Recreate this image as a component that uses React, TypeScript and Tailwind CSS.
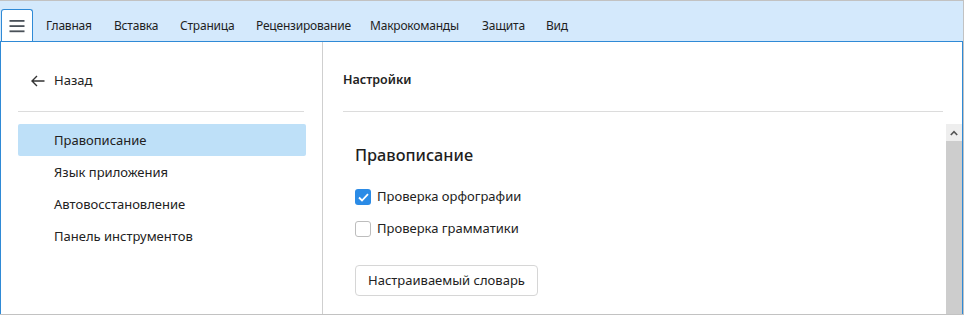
import React from "react";

const tabs: [string, number][] = [
  ["Главная", 68],
  ["Вставка", 66],
  ["Страница", 76],
  ["Рецензирование", 114],
  ["Макрокоманды", 112],
  ["Защита", 64],
  ["Вид", 40],
];
const items = ["Правописание", "Язык приложения", "Автовосстановление", "Панель инструментов"];

export default function App() {
  return (
    <div
      className="w-[964px] h-[315px] flex flex-col border-t border-r border-b border-[#c2c2c2] bg-white text-[#222]"
      style={{ fontFamily: '"Noto Sans", "Open Sans", sans-serif' }}
    >
      <div className="h-[41px] bg-[#d4e9fc] border-b border-[#2f8ad6] flex items-end shrink-0">
        <div className="ml-px w-[32px] h-[32px] bg-white border-l border-t border-r border-[#2f8ad6] rounded-t-[3px] flex items-center justify-center">
          <svg width="16" height="14" viewBox="0 0 16 14">
            <rect x="0.5" y="1" width="15" height="1.8" fill="#4a5159" />
            <rect x="0.5" y="6.2" width="15" height="1.8" fill="#4a5159" />
            <rect x="0.5" y="11.4" width="15" height="1.8" fill="#4a5159" />
          </svg>
        </div>
        <div className="flex h-[32px] items-center pl-[13px] pt-[1px] text-[12px] tracking-[-0.2px] text-[#1e1e1e]">
          {tabs.map(([t, w]) => (
            <span key={t} className="whitespace-nowrap" style={{ width: w }}>
              {t}
            </span>
          ))}
        </div>
      </div>
      <div className="flex-1 flex border-l border-r border-[#2f8ad6] min-h-0">
        <div className="w-[322px] border-r border-[#cfcfcf] pl-[17px] pr-[16px] pt-[21px] shrink-0">
          <div className="h-[32px] flex items-center pl-[13px] pt-[3px] text-[13px]">
            <svg width="14" height="12" viewBox="0 0 14 12" className="mr-[9px]">
              <path d="M6 1 L1 6 L6 11 M1 6 H13.5" fill="none" stroke="#333" strokeWidth="1.4" />
            </svg>
            <span>Назад</span>
          </div>
          <div className="mt-[16px] h-px bg-[#dcdcdc] mr-[2px]" />
          <div className="mt-[12px] flex flex-col">
            {items.map((t, i) => (
              <div
                key={t}
                className={`h-[32px] flex items-center pl-[36px] pt-[2px] text-[13px] rounded-[2px] ${i === 0 ? "bg-[#bee0f8]" : ""}`}
              >
                {t}
              </div>
            ))}
          </div>
        </div>
        <div className="flex-1 flex flex-col pt-[21px] min-w-0">
          <div className="pl-[20px] pr-[19px]">
            <div className="h-[32px] flex items-center pt-[2px] text-[12.5px] font-semibold text-[#222]">Настройки</div>
            <div className="mt-[16px] h-px bg-[#dcdcdc]" />
          </div>
          <div className="mt-[12px] flex-1 flex min-h-0">
            <div className="flex-1 pl-[32px] pt-[19px]">
              <div className="text-[16.3px] font-medium leading-[24px] text-[#1e1e1e]">Правописание</div>
              <div className="mt-[14px] flex flex-col">
                <label className="h-[32px] flex items-center text-[13px]">
                  <span className="w-[16px] h-[16px] rounded-[3px] bg-[#2b8be6] flex items-center justify-center mr-[6px]">
                    <svg width="11" height="9" viewBox="0 0 11 9">
                      <path d="M1 4.5 L4 7.5 L10 1.2" fill="none" stroke="white" strokeWidth="1.8" />
                    </svg>
                  </span>
                  Проверка орфографии
                </label>
                <label className="h-[32px] flex items-center text-[13px]">
                  <span className="w-[16px] h-[16px] rounded-[3px] border border-[#bdbdbd] bg-white mr-[6px]" />
                  Проверка грамматики
                </label>
              </div>
              <button className="mt-[20px] h-[31px] px-[12px] border border-[#d6d6d6] rounded-[4px] text-[13px] bg-white text-[#222]">
                Настраиваемый словарь
              </button>
            </div>
            <div className="w-[16px] flex flex-col shrink-0">
              <div className="h-[17px] bg-[#eeeeee] flex items-center justify-center">
                <svg width="8" height="6" viewBox="0 0 8 6">
                  <path d="M0.8 5 L4 1.6 L7.2 5" fill="none" stroke="#555" strokeWidth="1.6" />
                </svg>
              </div>
              <div className="flex-1 bg-[#cdcdcd]" />
            </div>
          </div>
        </div>
      </div>
    </div>
  );
}
